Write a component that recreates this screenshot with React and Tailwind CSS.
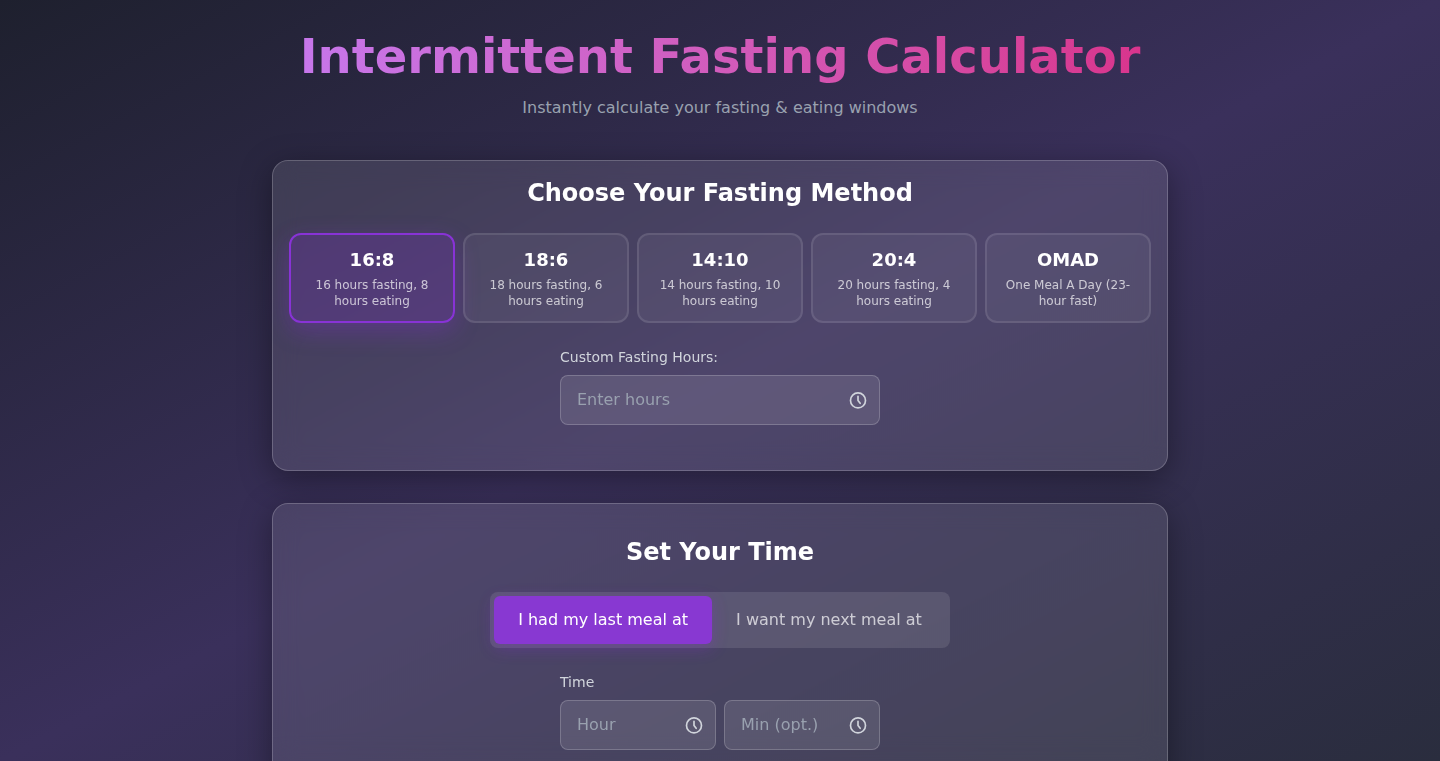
import React, { useState } from "react";

const METHODS = [
  { id: "16:8", description: "16 hours fasting, 8 hours eating" },
  { id: "18:6", description: "18 hours fasting, 6 hours eating" },
  { id: "14:10", description: "14 hours fasting, 10 hours eating" },
  { id: "20:4", description: "20 hours fasting, 4 hours eating" },
  { id: "OMAD", description: "One Meal A Day (23-hour fast)" },
];

const MODES = [
  { id: "last", label: "I had my last meal at" },
  { id: "next", label: "I want my next meal at" },
];

function ClockIcon() {
  return (
    <svg
      className="pointer-events-none absolute inset-y-0 right-3 my-auto h-5 w-5 text-gray-300"
      viewBox="0 0 24 24"
      fill="none"
      stroke="currentColor"
      strokeWidth="2"
      strokeLinecap="round"
      strokeLinejoin="round"
      aria-hidden="true"
    >
      <circle cx="12" cy="12.5" r="9" />
      <path d="M12 7.5v5l2.6 3.4" />
    </svg>
  );
}

function TimeInput({ id, label, placeholder, value, onChange }) {
  return (
    <div className="relative min-w-0 flex-1">
      <input
        id={id}
        type="text"
        inputMode="numeric"
        aria-label={label}
        className="w-full rounded-lg border border-white/20 bg-white/10 py-3 pl-4 pr-10 text-base text-white placeholder-gray-400 outline-none focus:border-purple-500"
        placeholder={placeholder}
        value={value}
        onChange={(e) => onChange(e.target.value)}
      />
      <ClockIcon />
    </div>
  );
}

export default function App() {
  const [method, setMethod] = useState("16:8");
  const [mode, setMode] = useState("last");
  const [customHours, setCustomHours] = useState("");
  const [hour, setHour] = useState("");
  const [minute, setMinute] = useState("");

  return (
    <div className="min-h-screen bg-[linear-gradient(to_bottom_right,#1e202e,#3a305b,#2a2d3e)] bg-fixed px-4 py-8 font-['DejaVu_Sans',sans-serif] text-white">
      <main className="mx-auto max-w-4xl">
        <header className="mb-10 text-center">
          <h1 className="mb-2 bg-gradient-to-r from-[#c678ee] to-[#d9318a] bg-clip-text pb-2 text-5xl leading-none font-bold text-transparent">
            Intermittent Fasting Calculator
          </h1>
          <p className="text-gray-400">
            Instantly calculate your fasting &amp; eating windows
          </p>
        </header>

        <section className="mb-8 rounded-2xl border border-white/20 bg-white/10 px-4 pt-4 pb-[45px] shadow-[0_8px_32px_rgba(0,0,0,0.37)] backdrop-blur-md">
          <h2 className="mb-6 text-center text-2xl font-bold">
            Choose Your Fasting Method
          </h2>

          <div className="mb-6 grid grid-cols-2 gap-2 md:grid-cols-5">
            {METHODS.map((item) => (
              <button
                key={item.id}
                type="button"
                aria-pressed={method === item.id}
                onClick={() => setMethod(item.id)}
                className={`rounded-xl border-2 p-3 text-center ${
                  method === item.id
                    ? "border-[#8833d6] bg-[#8a2be2]/20 shadow-[0_8px_24px_rgba(138,43,226,0.3)]"
                    : "border-white/10 bg-white/5"
                }`}
              >
                <span className="mb-1 block text-lg leading-[26px] font-bold">
                  {item.id}
                </span>
                <span className="block text-xs text-white/70">
                  {item.description}
                </span>
              </button>
            ))}
          </div>

          <div className="mx-auto max-w-xs">
            <label
              htmlFor="custom-hours"
              className="mb-2 block text-sm text-gray-300"
            >
              Custom Fasting Hours:
            </label>
            <TimeInput
              id="custom-hours"
              placeholder="Enter hours"
              value={customHours}
              onChange={setCustomHours}
            />
          </div>
        </section>

        <section className="rounded-2xl border border-white/20 bg-white/10 p-8 shadow-[0_8px_32px_rgba(0,0,0,0.37)] backdrop-blur-md">
          <h2 className="mb-6 text-center text-2xl font-bold">Set Your Time</h2>

          <div className="mb-6 flex justify-center">
            <div className="flex rounded-lg bg-white/10 p-1">
              {MODES.map((item) => (
                <button
                  key={item.id}
                  type="button"
                  aria-pressed={mode === item.id}
                  onClick={() => setMode(item.id)}
                  className={`rounded-md px-6 py-3 ${
                    mode === item.id
                      ? "bg-[#8838d2] text-white shadow-[0_4px_16px_rgba(138,43,226,0.3)]"
                      : "text-white/70"
                  }`}
                >
                  {item.label}
                </button>
              ))}
            </div>
          </div>

          <div className="mx-auto max-w-xs">
            <label htmlFor="hour" className="mb-2 block text-sm text-gray-300">
              Time
            </label>
            <div className="flex gap-2">
              <TimeInput
                id="hour"
                placeholder="Hour"
                value={hour}
                onChange={setHour}
              />
              <TimeInput
                id="minute"
                label="Minute"
                placeholder="Min (opt.)"
                value={minute}
                onChange={setMinute}
              />
            </div>
          </div>
        </section>
      </main>
    </div>
  );
}
